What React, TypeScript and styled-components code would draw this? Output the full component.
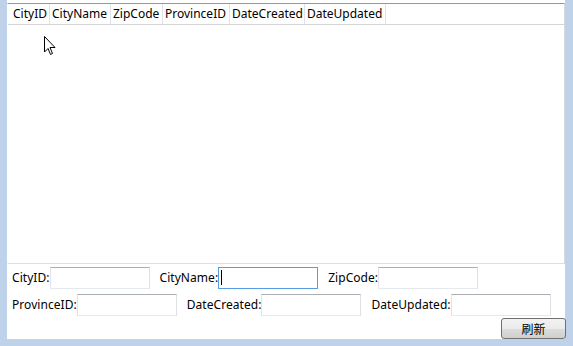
import React from 'react';
import styled, {createGlobalStyle} from 'styled-components';

const GlobalStyle = createGlobalStyle`
  html, body {
    margin: 0;
    padding: 0;
    background: #bed3ea;
  }
  body {
    font-family: "Noto Sans", "Noto Sans CJK SC", sans-serif;
    font-size: 12px;
    color: #000000;
  }
`;

const Frame = styled.div`
  position: relative;
  width: 573px;
  height: 346px;
  box-sizing: border-box;
  padding: 0 8px 7px 7px;
  background: #bed3ea;
`;

const Client = styled.div`
  display: flex;
  flex-direction: column;
  height: 100%;
  background: #ffffff;
`;

const Grid = styled.div`
  display: flex;
  flex-direction: column;
  margin-top: 3px;
  height: 262px;
  box-sizing: border-box;
  border: 1px solid #d3e0ee;
  border-top-color: #7f9dbd;
  border-left-color: #ffffff;
  border-right-color: #dadada;
`;

const HeaderRow = styled.div`
  display: flex;
  height: 20px;
  border-bottom: 1px solid #d5d5d5;
`;

const HeaderCell = styled.div<{$w: number; $first?: boolean}>`
  display: flex;
  align-items: center;
  width: ${p => p.$w}px;
  box-sizing: border-box;
  padding-left: ${p => (p.$first ? 5 : 2)}px;
  border-right: 1px solid #dde3e9;
  white-space: nowrap;
  overflow: hidden;
  line-height: 20px;
`;

const Form = styled.div`
  display: flex;
  flex-direction: column;
  gap: 5px;
  padding: 3px 0 0 5px;
`;

const FieldRow = styled.div`
  display: flex;
  align-items: center;
  height: 22px;
`;

const Label = styled.label<{$first?: boolean}>`
  margin-left: ${p => (p.$first ? 0 : 10)}px;
  white-space: nowrap;
  line-height: 22px;
  letter-spacing: 0.05px;
`;

const TextBox = styled.input<{$focused?: boolean}>`
  width: 100px;
  height: 22px;
  box-sizing: border-box;
  margin: 0;
  padding: 0 2px;
  font: inherit;
  background: #ffffff;
  border: 1px solid;
  border-color: ${p =>
    p.$focused ? '#569de5' : '#abadb3 #dbdfe6 #e3e9ef #e2e3ea'};
  outline: none;
`;

const Caret = styled.span`
  position: absolute;
  left: 3px;
  top: 3px;
  width: 1px;
  height: 15px;
  background: #000000;
`;

const FocusWrap = styled.span`
  position: relative;
  display: inline-flex;
`;

const ButtonRow = styled.div`
  display: flex;
  justify-content: flex-end;
  margin-top: -3px;
  margin-right: -1px;
`;

const Button = styled.button`
  width: 65px;
  height: 21px;
  padding: 0;
  font-family: "Noto Sans CJK SC", sans-serif;
  font-size: 12px;
  color: #000000;
  border: 1px solid #707070;
  border-radius: 3px;
  background: linear-gradient(#f2f2f2 0%, #ebebeb 50%, #dddddd 50%, #cfcfcf 100%);
  line-height: 18px;
`;

const Cursor = styled.svg`
  position: absolute;
  left: 44px;
  top: 36px;
`;

const columns = [
  {name: 'CityID', width: 42},
  {name: 'CityName', width: 61},
  {name: 'ZipCode', width: 52},
  {name: 'ProvinceID', width: 67},
  {name: 'DateCreated', width: 75},
  {name: 'DateUpdated', width: 81},
];

const App: React.FunctionComponent = () => {
  return (
    <Frame>
      <GlobalStyle />
      <Client>
        <Grid>
          <HeaderRow>
            {columns.map((c, i) => (
              <HeaderCell key={c.name} $w={c.width} $first={i === 0}>
                {c.name}
              </HeaderCell>
            ))}
          </HeaderRow>
        </Grid>
        <Form>
          <FieldRow>
            <Label $first>CityID:</Label>
            <TextBox />
            <Label>CityName:</Label>
            <FocusWrap>
              <TextBox $focused />
              <Caret />
            </FocusWrap>
            <Label>ZipCode:</Label>
            <TextBox />
          </FieldRow>
          <FieldRow>
            <Label $first>ProvinceID:</Label>
            <TextBox />
            <Label>DateCreated:</Label>
            <TextBox />
            <Label>DateUpdated:</Label>
            <TextBox />
          </FieldRow>
          <ButtonRow>
            <Button>刷新</Button>
          </ButtonRow>
        </Form>
      </Client>
      <Cursor width="13" height="20" viewBox="0 0 13 20">
        <path
          d="M0.5 0.5 L0.5 16 L4 12.5 L6.5 18.5 L8.5 17.5 L6 11.5 L11 11.5 Z"
          fill="#ffffff"
          stroke="#000000"
          strokeWidth="1"
        />
      </Cursor>
    </Frame>
  );
};

export default App;
